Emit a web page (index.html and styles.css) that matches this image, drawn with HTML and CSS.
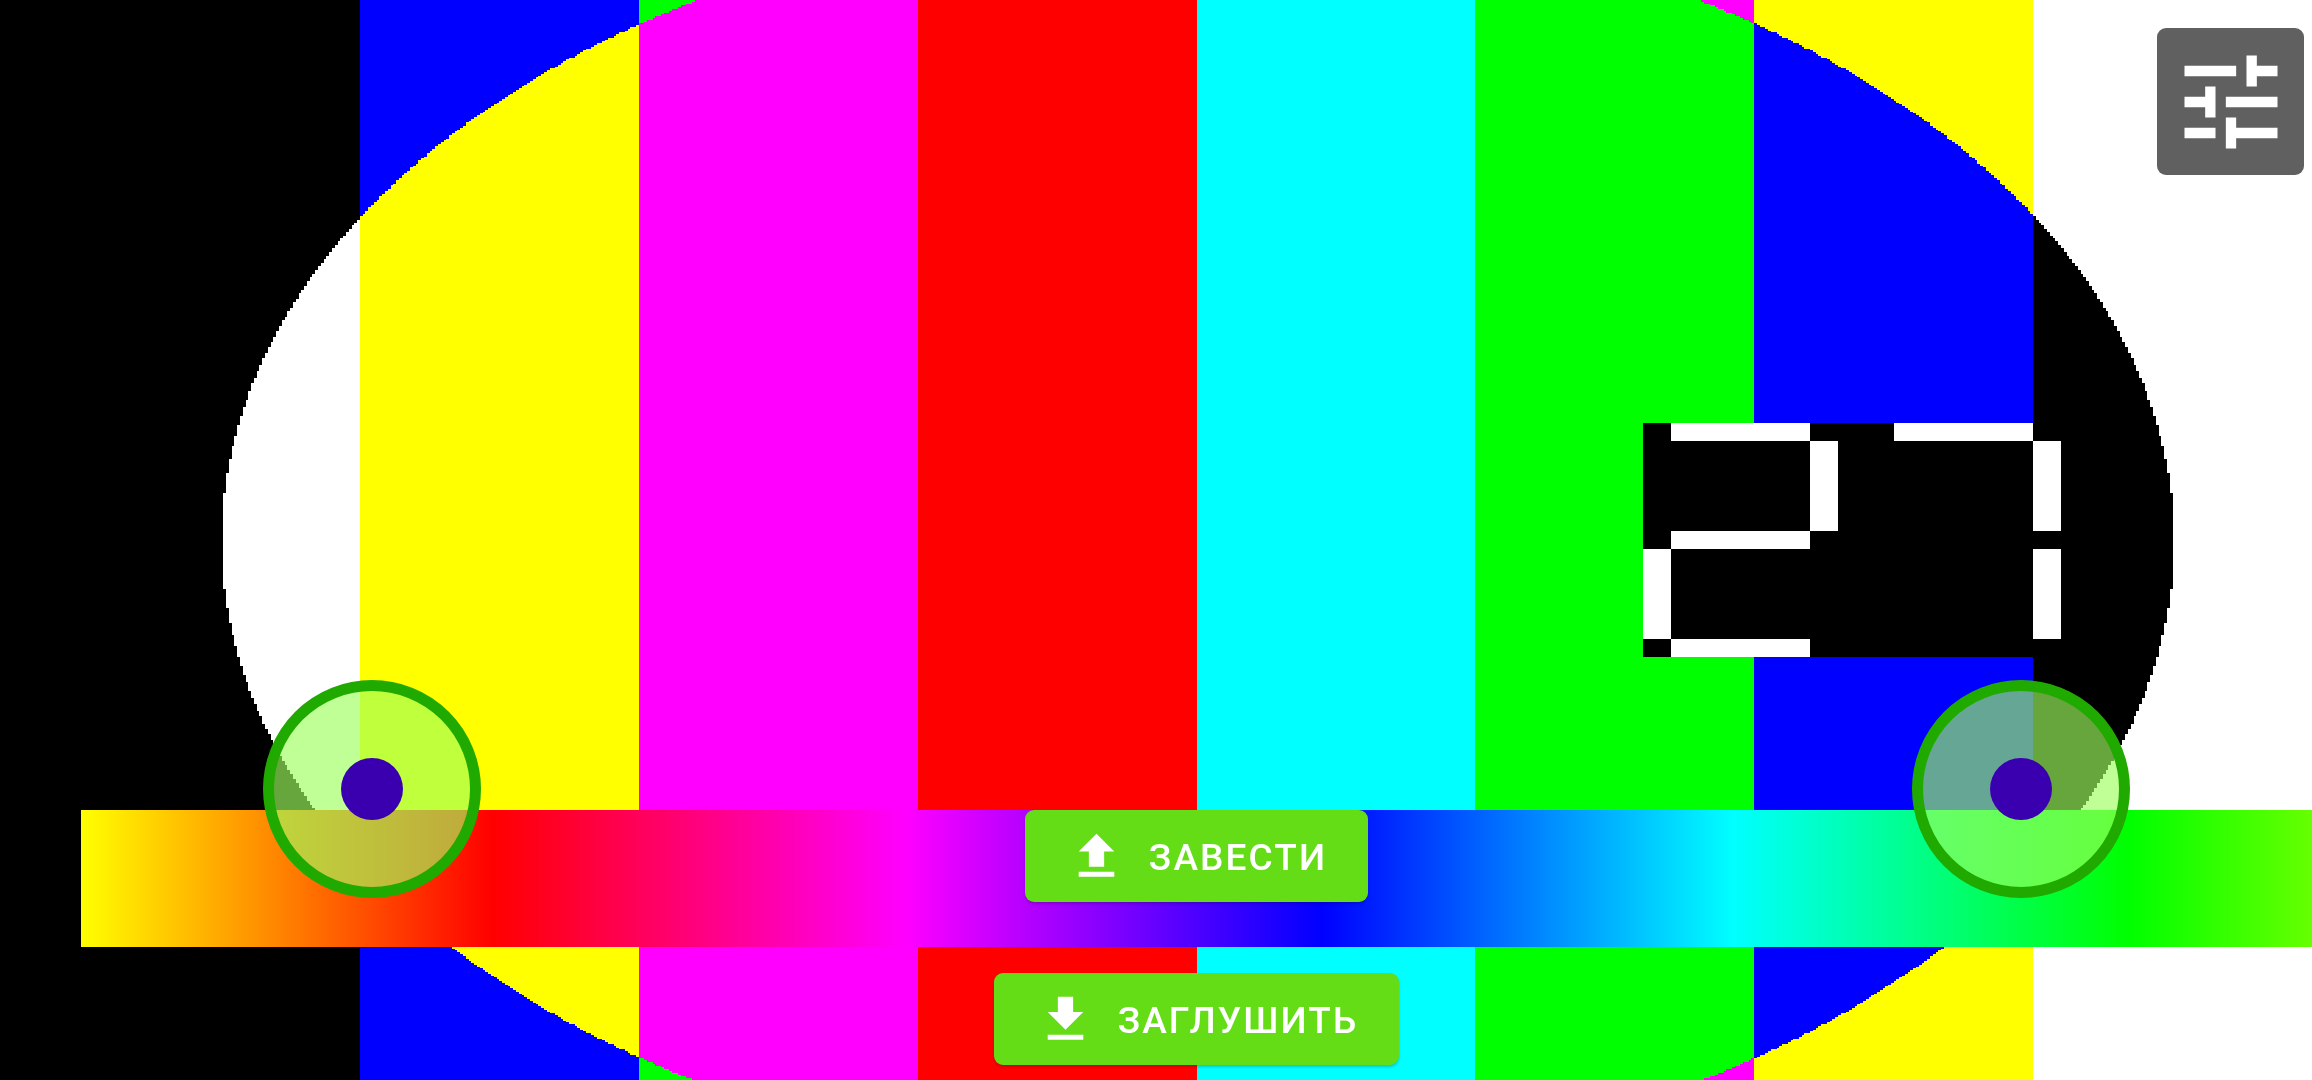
FILE: index.html
```html
<!DOCTYPE html>
<html lang="en">
<head>
    <meta charset="UTF-8">
    <title>Тест пульта</title>
    <link rel="stylesheet" href="styles.css">
</head>
<body>

<div id="screen">
    <canvas id="pattern" width="800" height="600"></canvas>

    <button id="settingsButton" type="button" aria-label="Настройки">
        <svg viewBox="0 0 24 24"><path d="M3 17v2h6v-2H3zM3 5v2h10V5H3zm10 16v-2h8v-2h-8v-2h-2v6h2zM7 9v2H3v2h4v2h2V9H7zm14 4v-2H11v2h10zm-6-4h2V7h4V5h-4V3h-2v6z"/></svg>
    </button>

    <div id="controls">
        <div id="hueBar">
            <div class="stick"><div class="knob"></div></div>
            <button class="action" type="button">
                <svg viewBox="0 0 24 24"><path d="M9 16h6v-6h4l-7-7-7 7h4zm-4 2h14v2H5z"/></svg>
                <span>ЗАВЕСТИ</span>
            </button>
            <div class="stick"><div class="knob"></div></div>
        </div>
        <button class="action" type="button">
            <svg viewBox="0 0 24 24"><path d="M19 9h-4V3H9v6H5l7 7 7-7zM5 18v2h14v-2H5z"/></svg>
            <span>ЗАГЛУШИТЬ</span>
        </button>
    </div>
</div>

<script src="script.js"></script>
</body>
</html>
```

FILE: styles.css
```css
* {
  box-sizing: border-box;
  margin: 0;
  padding: 0;
}

html, body {
  width: 100%;
  height: 100%;
  overflow: hidden;
  background: #000;
  font-family: Roboto, "Liberation Sans", sans-serif;
}

body {
  padding-left: 81px;
}

#screen {
  position: relative;
  width: 2231px;
  height: 1080px;
}

#pattern {
  display: block;
  width: 100%;
  height: 100%;
  image-rendering: pixelated;
}

#settingsButton {
  position: absolute;
  top: 28px;
  right: 8px;
  width: 147px;
  height: 147px;
  display: flex;
  align-items: center;
  justify-content: center;
  border: none;
  border-radius: 9px;
  background: #606060;
}

#settingsButton svg {
  width: 124px;
  height: 124px;
  fill: #fff;
}

#controls {
  position: absolute;
  left: 0;
  right: 0;
  bottom: 15px;
  display: flex;
  flex-direction: column;
  align-items: center;
  gap: 26px;
}

#hueBar {
  position: relative;
  width: 100%;
  height: 137px;
  display: flex;
  justify-content: center;
  background: linear-gradient(to right, #ff0 0, #f00 411px, #f0f 824px, #00f 1241px, #0ff 1652px, #0f0 2048px, #6f0 2231px);
}

.action {
  height: 92px;
  display: flex;
  align-items: center;
  gap: 22px;
  padding: 0 41px;
  border: none;
  border-radius: 9px;
  background: #64dd17;
  color: #fff;
  font-family: inherit;
  font-size: 37px;
  font-weight: 500;
  letter-spacing: 2.1px;
  white-space: nowrap;
  box-shadow: 0 2px 3px rgba(0, 0, 0, 0.2);
}

.action span {
  padding-top: 2px;
}

.action svg {
  width: 61px;
  height: 61px;
  fill: #fff;
  flex: none;
}

.stick {
  position: absolute;
  top: -130px;
  width: 218px;
  height: 218px;
  display: flex;
  align-items: center;
  justify-content: center;
  border: 11px solid #20aa00;
  border-radius: 50%;
  background: rgba(157, 255, 92, 0.65);
}

.stick:first-child {
  left: 182px;
}

.stick:last-child {
  right: 182px;
}

.knob {
  width: 62px;
  height: 62px;
  border-radius: 50%;
  background: #3a00b0;
}
```

FILE: script.js
```js
// Test card: 8 bars, colours are flipped inside the circle
const canvas = document.getElementById("pattern");
const ctx = canvas.getContext("2d");

const bars = [
    [0, 0, 0],
    [0, 0, 255],
    [0, 255, 0],
    [0, 255, 255],
    [255, 0, 0],
    [255, 0, 255],
    [255, 255, 0],
    [255, 255, 255]
];

const image = ctx.createImageData(800, 600);
for (let y = 0; y < 600; y++) {
    for (let x = 0; x < 800; x++) {
        const color = bars[Math.floor(x / 100)];
        const inside = (x - 400) ** 2 + (y - 300) ** 2 < 350 ** 2;
        const i = (y * 800 + x) * 4;
        image.data[i] = inside ? 255 - color[0] : color[0];
        image.data[i + 1] = inside ? 255 - color[1] : color[1];
        image.data[i + 2] = inside ? 255 - color[2] : color[2];
        image.data[i + 3] = 255;
    }
}
ctx.putImageData(image, 0, 0);

// Seven segment counter, segments are [x, y, w, h]
const segments = {
    top: [10, 0, 50, 10],
    upperLeft: [0, 10, 10, 50],
    upperRight: [60, 10, 10, 50],
    middle: [10, 60, 50, 10],
    lowerLeft: [0, 70, 10, 50],
    lowerRight: [60, 70, 10, 50],
    bottom: [10, 120, 50, 10]
};

function drawDigit(left, names) {
    ctx.fillStyle = "#fff";
    names.forEach(function (name) {
        const s = segments[name];
        ctx.fillRect(left + s[0], 235 + s[1], s[2], s[3]);
    });
}

ctx.fillStyle = "#000";
ctx.fillRect(560, 235, 160, 130);
drawDigit(560, ["top", "upperRight", "middle", "lowerLeft", "bottom"]);
drawDigit(640, ["top", "upperRight", "lowerRight"]);
```
